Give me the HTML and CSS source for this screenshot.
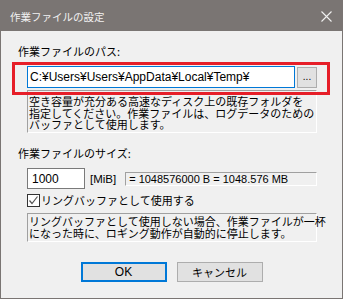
FILE: index.html
```html
<!DOCTYPE html>
<html lang="ja">
<head>
<meta charset="utf-8">
<link rel="stylesheet" href="styles.css">
</head>
<body>
<div class="window">
  <div class="titlebar">
    <span class="title">作業ファイルの設定</span>
    <svg class="close" width="11" height="11" viewBox="0 0 11 11"><path d="M0.5 0.5 L10.5 10.5 M10.5 0.5 L0.5 10.5" stroke="#f0f0f0" stroke-width="1.1" fill="none"/></svg>
  </div>
  <div class="content">
    <div class="label">作業ファイルのパス:</div>
    <div class="row path-row">
      <div class="edit focused">C:¥Users¥Users¥AppData¥Local¥Temp¥</div>
      <div class="browse">...</div>
    </div>
    <div class="desc three">
      <div class="line">空き容量が充分ある高速なディスク上の既存フォルダを</div>
      <div class="line">指定してください。作業ファイルは、ログデータのための</div>
      <div class="line">バッファとして使用します。</div>
    </div>
    <div class="label size-label">作業ファイルのサイズ:</div>
    <div class="row size-row">
      <div class="edit size">1000</div>
      <span class="unit">[MiB]</span>
      <div class="result">= 1048576000 B = 1048.576 MB</div>
    </div>
    <div class="row check-row">
      <span class="checkbox"><svg width="11" height="11" viewBox="0 0 11 11"><path d="M1.5 5.5 L4 8.5 L9.5 1.5" stroke="#555" stroke-width="1.2" fill="none"/></svg></span>
      <span class="check-label">リングバッファとして使用する</span>
    </div>
    <div class="desc two">
      <div class="line">リングバッファとして使用しない場合、作業ファイルが一杯</div>
      <div class="line">になった時に、ロギング動作が自動的に停止します。</div>
    </div>
    <div class="buttons">
      <div class="btn default">OK</div>
      <div class="btn">キャンセル</div>
    </div>
  </div>
  <div class="annotation"></div>
</div>
</body>
</html>
```
FILE: styles.css
```css
html, body {
  margin: 0;
  padding: 0;
  background: #f0f0f0;
}
.window {
  position: relative;
  width: 341px;
  height: 297px;
  border: 1px solid #7a7573;
  background: #f0f0f0;
  font-family: "Noto Sans CJK JP", "Liberation Sans", sans-serif;
  font-size: 11px;
  color: #000;
}
.titlebar {
  height: 30px;
  background: #7a7573;
  display: flex;
  align-items: center;
  justify-content: space-between;
  padding: 0 10px 0 9px;
}
.title {
  color: #f2f2f2;
  font-size: 10.5px;
  line-height: 13px;
  margin-top: 1px;
}
.close {
  display: block;
  margin-top: 1px;
}
.content {
  display: flex;
  flex-direction: column;
  padding: 14px 25px 0 17px;
}
.label {
  line-height: 13px;
  height: 13px;
}
.row {
  display: flex;
  align-items: center;
  margin-left: 9px;
}
.path-row {
  margin-top: 8px;
  gap: 2px;
}
.edit {
  box-sizing: border-box;
  background: #fff;
  border: 1px solid #7a7a7a;
  font-family: "Liberation Sans", "Noto Sans CJK JP", sans-serif;
  font-size: 12px;
  padding-left: 2px;
  display: flex;
  align-items: center;
}
.edit.focused {
  width: 268px;
  height: 22px;
  border-color: #0078d7;
}
.browse {
  box-sizing: border-box;
  width: 20px;
  height: 21px;
  background: #e1e1e1;
  border: 1px solid #adadad;
  font-family: "Liberation Sans", sans-serif;
  font-size: 10px;
  display: flex;
  align-items: center;
  justify-content: center;
  padding-bottom: 1px;
}
.desc {
  box-sizing: border-box;
  width: 290px;
  margin-left: 9px;
  border-top: 1px solid #a0a0a0;
  border-left: 1px solid #a0a0a0;
  border-right: 1px solid #fff;
  border-bottom: 1px solid #fff;
  padding-left: 1px;
  white-space: nowrap;
}
.line {
  height: 11.5px;
  line-height: 11.5px;
  font-size: 11px;
}
.desc.three {
  margin-top: 2px;
  height: 43px;
  padding-top: 5px;
}
.size-label {
  margin-top: 14px;
}
.size-row {
  margin-top: 8px;
}
.edit.size {
  width: 58px;
  height: 21px;
  padding-left: 4px;
}
.unit {
  font-family: "Liberation Sans", sans-serif;
  font-size: 11.5px;
  margin-left: 5px;
}
.result {
  box-sizing: border-box;
  width: 192px;
  height: 14px;
  margin-left: 9px;
  border-top: 1px solid #a0a0a0;
  border-left: 1px solid #a0a0a0;
  border-right: 1px solid #fff;
  border-bottom: 1px solid #fff;
  font-family: "Liberation Sans", sans-serif;
  font-size: 11px;
  line-height: 12px;
  padding-left: 3px;
}
.check-row {
  margin-top: 5px;
  height: 13px;
}
.checkbox {
  box-sizing: border-box;
  width: 13px;
  height: 13px;
  border: 1px solid #333;
  background: #fff;
  display: flex;
  align-items: center;
  justify-content: center;
}
.checkbox svg {
  display: block;
}
.check-label {
  margin-left: 1px;
  line-height: 13px;
}
.desc.two {
  margin-top: 6px;
  height: 29px;
  padding-top: 2px;
}
.buttons {
  display: flex;
  justify-content: center;
  gap: 10px;
  margin-top: 20px;
  margin-right: -8px;
}
.btn {
  box-sizing: border-box;
  width: 86px;
  height: 20px;
  background: #e1e1e1;
  border: 1px solid #adadad;
  display: flex;
  align-items: center;
  justify-content: center;
  font-size: 11px;
}
.btn.default {
  border: 2px solid #0078d7;
  font-family: "Liberation Sans", sans-serif;
  font-size: 12px;
}
.annotation {
  position: absolute;
  left: 11px;
  top: 61px;
  width: 312px;
  height: 27px;
  border: 3px solid #e61e28;
}
```
